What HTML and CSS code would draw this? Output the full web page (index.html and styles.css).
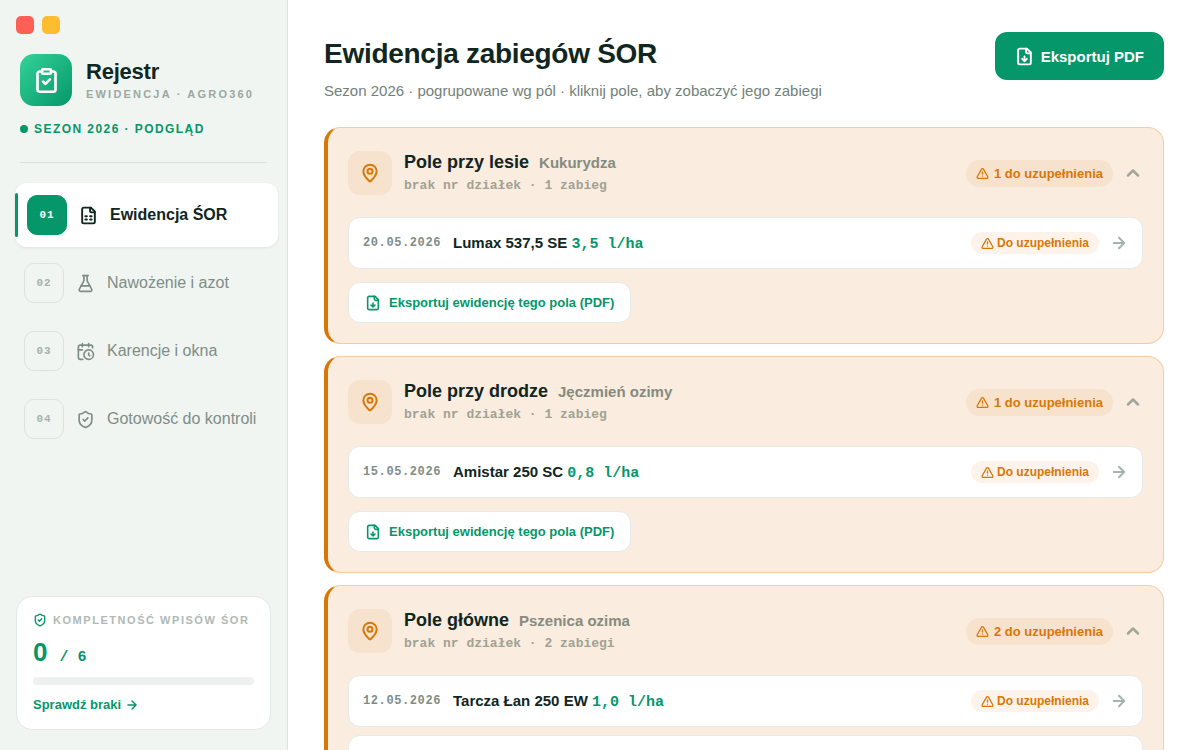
FILE: index.html
```html
<!DOCTYPE html>
<html lang="pl">
<head>
<meta charset="utf-8">
<title>Ewidencja zabiegów ŚOR</title>
<link rel="stylesheet" href="styles.css">
</head>
<body>
<svg class="sprite" aria-hidden="true">
  <symbol id="clipboard" viewBox="0 0 24 24"><rect width="8" height="4" x="8" y="2" rx="1"/><path d="M16 4h2a2 2 0 0 1 2 2v14a2 2 0 0 1-2 2H6a2 2 0 0 1-2-2V6a2 2 0 0 1 2-2h2"/><path d="m9 13 2 2 4-4"/></symbol>
  <symbol id="sheet" viewBox="0 0 24 24"><path d="M15 2H6a2 2 0 0 0-2 2v16a2 2 0 0 0 2 2h12a2 2 0 0 0 2-2V7Z"/><path d="M14 2v4a2 2 0 0 0 2 2h4"/><path d="M8 13h2M14 13h2M8 17h2M14 17h2"/></symbol>
  <symbol id="flask" viewBox="0 0 24 24"><path d="M14 2v6a2 2 0 0 0 .245.96l5.51 10.08A2 2 0 0 1 18 22H6a2 2 0 0 1-1.755-2.96l5.51-10.08A2 2 0 0 0 10 8V2"/><path d="M6.453 15h11.094M8.5 2h7"/></symbol>
  <symbol id="calendar" viewBox="0 0 24 24"><path d="M21 7.500V6a2 2 0 0 0-2-2H5a2 2 0 0 0-2 2v14a2 2 0 0 0 2 2h3.500"/><path d="M16 2v4M8 2v4M3 10h5"/><path d="M17.500 17.500 16 16.300V14"/><circle cx="16" cy="16" r="6"/></symbol>
  <symbol id="shield" viewBox="0 0 24 24"><path d="M20 13c0 5-3.500 7.500-7.660 8.950a1 1 0 0 1-.67-.01C7.500 20.500 4 18 4 13V6a1 1 0 0 1 1-1c2 0 4.500-1.200 6.240-2.720a1.170 1.170 0 0 1 1.520 0C14.510 3.810 17 5 19 5a1 1 0 0 1 1 1z"/><path d="m9 12 2 2 4-4"/></symbol>
  <symbol id="download" viewBox="0 0 24 24"><path d="M15 2H6a2 2 0 0 0-2 2v16a2 2 0 0 0 2 2h12a2 2 0 0 0 2-2V7Z"/><path d="M14 2v4a2 2 0 0 0 2 2h4M12 18v-6M9 15l3 3 3-3"/></symbol>
  <symbol id="pin" viewBox="0 0 24 24"><path d="M20 10c0 4.993-5.539 10.193-7.399 11.799a1 1 0 0 1-1.202 0C9.539 20.193 4 14.993 4 10a8 8 0 0 1 16 0"/><circle cx="12" cy="10" r="3"/></symbol>
  <symbol id="warning" viewBox="0 0 24 24"><path d="m21.730 18-8-14a2 2 0 0 0-3.480 0l-8 14A2 2 0 0 0 4 21h16a2 2 0 0 0 1.730-3M12 9v4M12 17h.01"/></symbol>
  <symbol id="up" viewBox="0 0 24 24"><path d="m18 15-6-6-6 6"/></symbol>
  <symbol id="arrow" viewBox="0 0 24 24"><path d="M5 12h14M12 5l7 7-7 7"/></symbol>
</svg>
<div class="app">
  <aside class="sidebar">
    <div class="window-controls"><button class="dot dot-red" aria-label="Zamknij"></button><button class="dot dot-yellow" aria-label="Minimalizuj"></button></div>
    <header class="brand">
      <div class="brand-row">
        <div class="logo"><svg class="icon i28"><use href="#clipboard"/></svg></div>
        <div><div class="brand-name">Rejestr</div><div class="brand-sub">EWIDENCJA · AGRO360</div></div>
      </div>
      <div class="season"><span class="bullet"></span>SEZON 2026 · PODGLĄD</div>
    </header>
    <nav class="nav">
      <a class="nav-item active" href="#"><span class="num">01</span><svg class="icon i19"><use href="#sheet"/></svg>Ewidencja ŚOR</a>
      <a class="nav-item" href="#"><span class="num">02</span><svg class="icon i19"><use href="#flask"/></svg>Nawożenie i azot</a>
      <a class="nav-item" href="#"><span class="num">03</span><svg class="icon i19"><use href="#calendar"/></svg>Karencje i okna</a>
      <a class="nav-item" href="#"><span class="num">04</span><svg class="icon i19"><use href="#shield"/></svg>Gotowość do kontroli</a>
    </nav>
    <section class="progress-card">
      <div class="progress-label"><svg class="icon i14"><use href="#shield"/></svg>KOMPLETNOŚĆ WPISÓW ŚOR</div>
      <div class="score">0<span class="score-total">/ 6</span></div>
      <div class="track"></div>
      <a class="check-link" href="#">Sprawdź braki <svg class="icon i14"><use href="#arrow"/></svg></a>
    </section>
  </aside>
  <main class="main">
    <header class="page-head">
      <div><h1 class="title">Ewidencja zabiegów ŚOR</h1><p class="subtitle">Sezon 2026 · pogrupowane wg pól · kliknij pole, aby zobaczyć jego zabiegi</p></div>
      <button class="primary"><svg class="icon i19"><use href="#download"/></svg>Eksportuj PDF</button>
    </header>
    <section class="field">
      <button class="field-head">
        <span class="pin"><svg class="icon i20"><use href="#pin"/></svg></span>
        <span class="field-text"><span class="field-title">Pole przy lesie<span class="crop">Kukurydza</span></span><span class="meta">brak nr działek · 1 zabieg</span></span>
        <span class="badge"><svg class="icon i13"><use href="#warning"/></svg>1 do uzupełnienia</span>
        <svg class="icon i20 muted"><use href="#up"/></svg>
      </button>
      <div class="rows">
        <a class="row" href="#"><time class="date">20.05.2026</time><span class="product">Lumax 537,5 SE <span class="dose">3,5 l/ha</span></span><span class="status"><svg class="icon i13"><use href="#warning"/></svg>Do uzupełnienia</span><svg class="icon i18 muted"><use href="#arrow"/></svg></a>
      </div>
      <button class="secondary"><svg class="icon i16"><use href="#download"/></svg>Eksportuj ewidencję tego pola (PDF)</button>
    </section>
    <section class="field">
      <button class="field-head">
        <span class="pin"><svg class="icon i20"><use href="#pin"/></svg></span>
        <span class="field-text"><span class="field-title">Pole przy drodze<span class="crop">Jęczmień ozimy</span></span><span class="meta">brak nr działek · 1 zabieg</span></span>
        <span class="badge"><svg class="icon i13"><use href="#warning"/></svg>1 do uzupełnienia</span>
        <svg class="icon i20 muted"><use href="#up"/></svg>
      </button>
      <div class="rows">
        <a class="row" href="#"><time class="date">15.05.2026</time><span class="product">Amistar 250 SC <span class="dose">0,8 l/ha</span></span><span class="status"><svg class="icon i13"><use href="#warning"/></svg>Do uzupełnienia</span><svg class="icon i18 muted"><use href="#arrow"/></svg></a>
      </div>
      <button class="secondary"><svg class="icon i16"><use href="#download"/></svg>Eksportuj ewidencję tego pola (PDF)</button>
    </section>
    <section class="field">
      <button class="field-head">
        <span class="pin"><svg class="icon i20"><use href="#pin"/></svg></span>
        <span class="field-text"><span class="field-title">Pole główne<span class="crop">Pszenica ozima</span></span><span class="meta">brak nr działek · 2 zabiegi</span></span>
        <span class="badge"><svg class="icon i13"><use href="#warning"/></svg>2 do uzupełnienia</span>
        <svg class="icon i20 muted"><use href="#up"/></svg>
      </button>
      <div class="rows">
        <a class="row" href="#"><time class="date">12.05.2026</time><span class="product">Tarcza Łan 250 EW <span class="dose">1,0 l/ha</span></span><span class="status"><svg class="icon i13"><use href="#warning"/></svg>Do uzupełnienia</span><svg class="icon i18 muted"><use href="#arrow"/></svg></a>
        <div class="row"></div>
      </div>
    </section>
  </main>
</div>
</body>
</html>
```
FILE: styles.css
```css
* { box-sizing: border-box; }
body {
  margin: 0;
  background: #fff;
  color: #10261f;
  font-family: "Helvetica Neue", Helvetica, "Liberation Sans", Arial, sans-serif;
}
button { font: inherit; border: 0; cursor: pointer; }
a { color: inherit; text-decoration: none; }
.sprite { display: none; }
.icon { flex: none; fill: none; stroke: currentColor; stroke-width: 2.4; stroke-linecap: round; stroke-linejoin: round; }
.i13 { width: 13px; height: 13px; }
.i14 { width: 14px; height: 14px; }
.i16 { width: 16px; height: 16px; }
.i18 { width: 18px; height: 18px; }
.i19 { width: 19px; height: 19px; }
.i20 { width: 20px; height: 20px; }
.i28 { width: 27px; height: 27px; }

.app { display: grid; grid-template-columns: 288px minmax(0, 1fr); grid-template-rows: minmax(0, 1fr); height: 100vh; }
.sidebar { display: flex; flex-direction: column; background: #f0f5f2; border-right: 1px solid #dce3df; padding: 16px 9px 20px 15px; }
.window-controls { display: flex; gap: 8px; padding-left: 1px; }
.dot { width: 18px; height: 18px; padding: 0; border-radius: 5px; }
.dot-red { background: #ff5f57; }
.dot-yellow { background: #febc2e; }
.brand { margin: 20px 11px 20px 5px; padding-bottom: 26px; border-bottom: 1px solid #dce3df; }
.brand-row { display: flex; align-items: center; gap: 14px; }
.logo { display: grid; place-items: center; width: 52px; height: 52px; border-radius: 14px; color: #fff; background: linear-gradient(135deg, #34d399, #059669); }
.brand-name { font-size: 22px; line-height: 24px; font-weight: 700; letter-spacing: -0.01em; }
.brand-sub { font-size: 11px; line-height: 13px; font-weight: 700; letter-spacing: 0.2em; color: #9aa8a1; margin-top: 4px; }
.season { display: flex; align-items: center; gap: 6px; margin-top: 16px; font-size: 12px; line-height: 14px; font-weight: 700; letter-spacing: 0.12em; color: #059669; }
.bullet { width: 8px; height: 8px; border-radius: 50%; background: #059669; }

.nav { display: flex; flex-direction: column; gap: 4px; }
.nav-item { display: flex; align-items: center; gap: 12px; height: 64px; padding: 0 9px; border-radius: 12px; font-size: 16px; color: #7f8d87; white-space: nowrap; }
.num { display: grid; place-items: center; width: 40px; height: 40px; border: 1px solid #dce3df; border-radius: 10px; font: 700 11px "Liberation Mono", monospace; letter-spacing: 0.08em; color: #a6b2ac; }
.nav-item .icon { stroke-width: 2.1; }
.active { position: relative; padding: 0 12px; background: #fff; color: #10261f; font-weight: 700; box-shadow: 0 1px 3px #10261f14; }
.nav-item.active .icon { stroke-width: 2.4; }
.active::before { content: ""; position: absolute; left: 0; top: 10px; bottom: 10px; width: 3px; border-radius: 2px; background: #059669; }
.active .num { background: #059669; border-color: #059669; color: #fff; }

.progress-card { margin: auto 7px 0 1px; padding: 16px; background: #fff; border: 1px solid #e3e9e6; border-radius: 16px; color: #059669; }
.progress-label { display: flex; align-items: center; gap: 6px; font-size: 11px; line-height: 14px; font-weight: 700; letter-spacing: 0.14em; color: #b0b9b5; white-space: nowrap; }
.progress-label .icon { color: #059669; }
.score { display: flex; align-items: baseline; gap: 12px; margin-top: 10px; font-size: 26px; line-height: 30px; font-weight: 700; }
.score-total { font: 700 15px/30px "Liberation Mono", monospace; }
.track { height: 8px; margin-top: 4px; border-radius: 4px; background: #eff1f0; }
.check-link { display: flex; align-items: center; gap: 4px; margin-top: 12px; font-size: 13px; line-height: 16px; font-weight: 700; }

.main { display: flex; flex-direction: column; gap: 12px; padding: 32px 36px 0; overflow: hidden; }
.page-head { display: flex; flex: none; justify-content: space-between; align-items: flex-start; margin-bottom: 14px; }
.title { margin: 5px 0 0; font-size: 28px; line-height: 34px; letter-spacing: -0.01em; }
.subtitle { margin: 10px 0 0; font-size: 15px; line-height: 20px; color: #71817a; }
.primary { display: flex; align-items: center; gap: 7px; height: 48px; padding: 0 20px; border-radius: 12px; background: #059669; color: #fff; font-size: 15px; font-weight: 700; }
.field { flex: none; padding: 23px 20px 20px; border: 1px solid #f2cda2; border-left: 4px solid #d97706; border-radius: 16px; background: #faecdf; }
.field-head { display: flex; align-items: center; width: 100%; padding: 0; background: none; color: inherit; text-align: left; }
.field-head .muted { margin-left: 10px; }
.pin { display: grid; place-items: center; width: 44px; height: 44px; border-radius: 12px; background: #f7e2ce; color: #d97706; }
.field-text { display: flex; flex: 1; flex-direction: column; gap: 5px; margin-left: 12px; }
.field-title { display: flex; align-items: baseline; gap: 10px; font-size: 18px; line-height: 21px; font-weight: 700; }
.crop { font-size: 15px; color: #858b80; }
.meta { font: 700 13px/16px "Liberation Mono", monospace; color: #a0a294; }
.badge, .status { display: flex; align-items: center; border-radius: 14px; color: #d97706; font-weight: 700; }
.badge { gap: 5px; padding: 5px 10px; background: #f7e2ce; font-size: 13px; line-height: 17px; }
.rows { display: flex; flex-direction: column; gap: 8px; margin-top: 22px; }
.row { display: flex; align-items: center; height: 52px; padding: 0 14px; border: 1px solid #e6ebe9; border-radius: 12px; background: #fff; }
.date { font: 700 12px "Liberation Mono", monospace; letter-spacing: 0.05em; color: #7f8d87; }
.product { flex: 1; margin-left: 12px; font-size: 15px; font-weight: 700; }
.dose { font: 700 15px "Liberation Mono", monospace; color: #059669; }
.status { gap: 3px; margin-right: 11px; padding: 3px 10px; background: #fdf3ea; font-size: 12px; line-height: 16px; }
.muted { color: #a0a89c; stroke-width: 3; }
.row .muted { color: #a6b2ac; stroke-width: 2.6; }
.secondary { display: flex; align-items: center; gap: 8px; height: 41px; margin-top: 13px; padding: 0 16px; border: 1px solid #e6ebe9; border-radius: 12px; background: #fff; color: #059669; font-size: 13px; font-weight: 700; }
```
